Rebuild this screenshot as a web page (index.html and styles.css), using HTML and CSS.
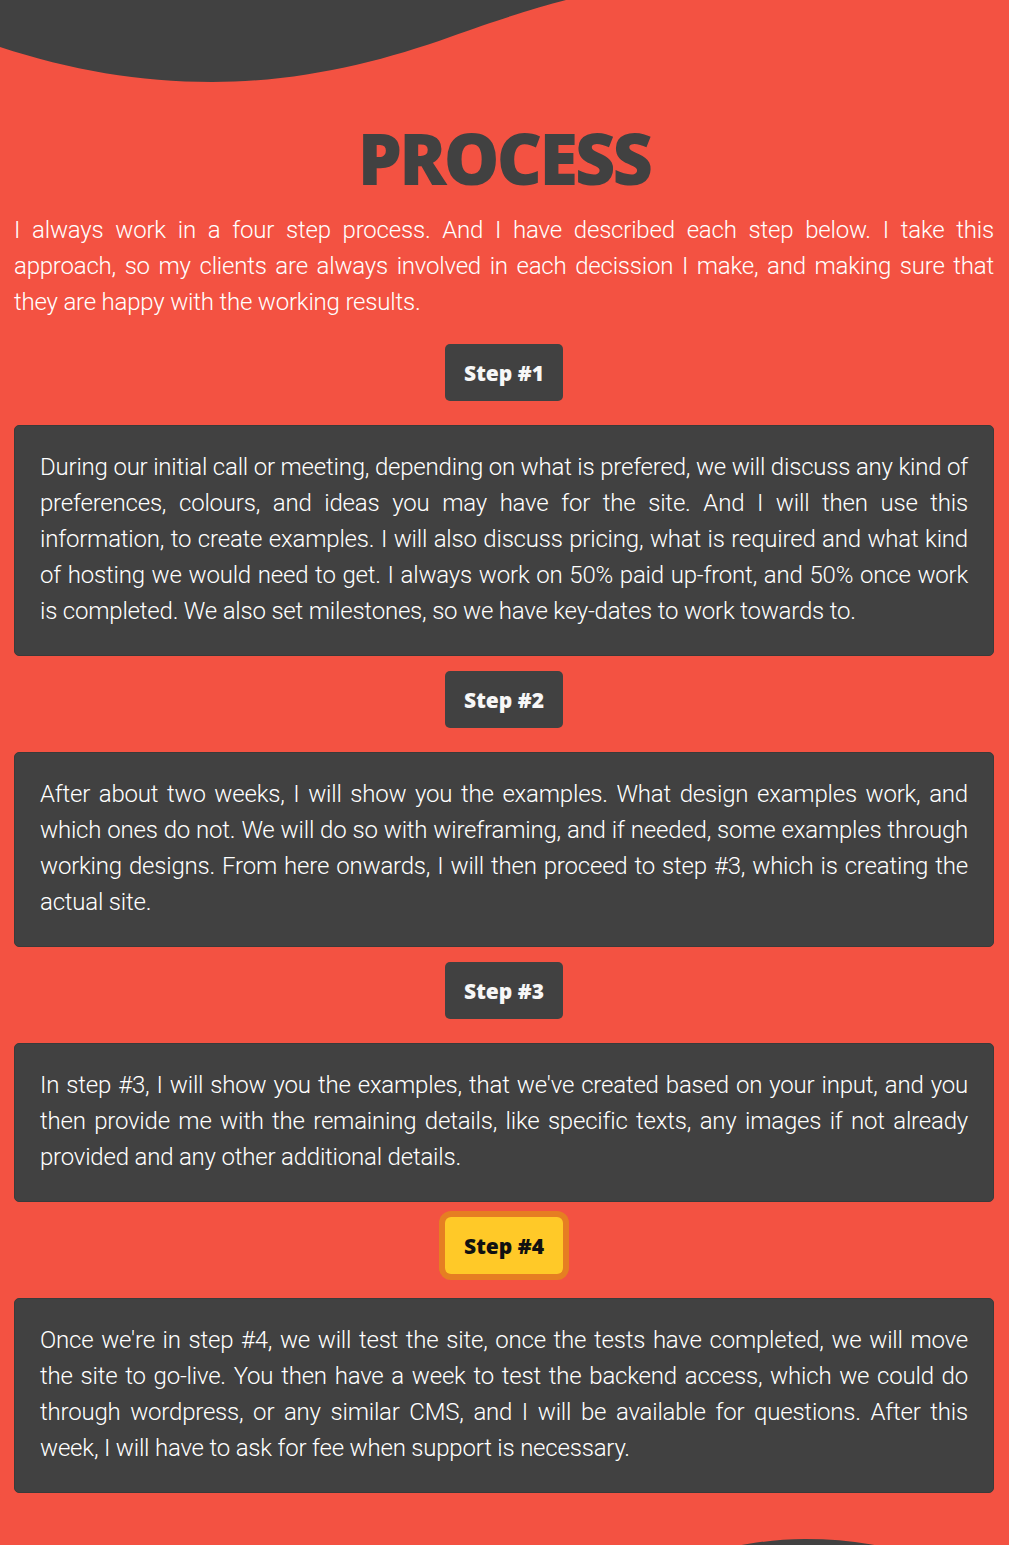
FILE: index.html
```html
<!DOCTYPE html>
<html lang="en">
<head>
<meta charset="utf-8">
<title>Process</title>
<link rel="stylesheet" href="styles.css">
</head>
<body>
<section class="process">
  <svg class="wave-top" viewBox="0 0 1009 84" preserveAspectRatio="none" aria-hidden="true">
    <path d="M0,0 L0,47 C70,70 140,82 212,82 C300,82 380,62 450,37 C500,19 535,8 566,0 Z" fill="#414141"/>
  </svg>
  <div class="content">
    <h1 class="title">PROCESS</h1>
    <p class="intro">I always work in a four step process. And I have described each step below. I take this approach, so my clients are always involved in each decission I make, and making sure that they are happy with the working results.</p>

    <div class="steps">
      <button class="step-btn first">Step #1</button>
      <div class="step-box">
        <p>During our initial call or meeting, depending on what is prefered, we will discuss any kind of preferences, colours, and ideas you may have for the site. And I will then use this information, to create examples. I will also discuss pricing, what is required and what kind of hosting we would need to get. I always work on 50% paid up-front, and 50% once work is completed. We also set milestones, so we have key-dates to work towards to.</p>
      </div>

      <button class="step-btn">Step #2</button>
      <div class="step-box">
        <p>After about two weeks, I will show you the examples. What design examples work, and which ones do not. We will do so with wireframing, and if needed, some examples through working designs. From here onwards, I will then proceed to step #3, which is creating the actual site.</p>
      </div>

      <button class="step-btn">Step #3</button>
      <div class="step-box">
        <p>In step #3, I will show you the examples, that we've created based on your input, and you then provide me with the remaining details, like specific texts, any images if not already provided and any other additional details.</p>
      </div>

      <button class="step-btn active">Step #4</button>
      <div class="step-box">
        <p>Once we're in step #4, we will test the site, once the tests have completed, we will move the site to go-live. You then have a week to test the backend access, which we could do through wordpress, or any similar CMS, and I will be available for questions. After this week, I will have to ask for fee when support is necessary.</p>
      </div>
    </div>
  </div>
  <svg class="wave-bottom" viewBox="0 0 1009 60" preserveAspectRatio="none" aria-hidden="true">
    <path d="M0,60 L520,60 C640,60 700,9 805,9 C900,9 960,40 1009,60 Z" fill="#414141"/>
  </svg>
</section>
</body>
</html>
```

FILE: styles.css
```css
* {
  box-sizing: border-box;
}

html, body {
  margin: 0;
  padding: 0;
  background: #f35242;
}

body {
  font-family: "Roboto Light", Roboto, "Open Sans", sans-serif;
  color: #ffffff;
}

.process {
  display: flex;
  flex-direction: column;
}

.wave-top {
  display: block;
  width: 100%;
  height: 84px;
}

.wave-bottom {
  display: block;
  width: 100%;
  height: 60px;
  margin-top: 37px;
}

.content {
  padding: 0 15px 0 14px;
}

.title {
  margin: 32px 0 0;
  font-family: "Open Sans", sans-serif;
  font-weight: 800;
  font-size: 70px;
  line-height: 84px;
  letter-spacing: -2.8px;
  text-align: center;
  color: #414141;
}

.intro {
  margin: 12px 0 0;
  font-weight: 300;
  font-size: 24px;
  line-height: 36px;
  letter-spacing: -0.2px;
  text-align: justify;
  color: #ffffff;
}

.steps {
  display: flex;
  flex-direction: column;
  align-items: center;
}

.step-btn {
  width: 118px;
  height: 57px;
  margin-top: 15px;
  border: none;
  border-radius: 5px;
  background: #414141;
  color: #f7f7f7;
  font-family: "Open Sans", sans-serif;
  font-weight: 800;
  font-size: 21px;
  letter-spacing: 0;
  cursor: pointer;
}

.step-btn.first {
  margin-top: 24px;
}

.step-btn.active {
  background: #ffc928;
  color: #111111;
  box-shadow: 0 0 0 6px #e67e22;
  border-radius: 6px;
}

.step-box {
  align-self: stretch;
  margin-top: 24px;
  padding: 23px 25px 26px;
  background: #414141;
  border: 1px solid #3a3a3a;
  border-radius: 5px;
}

.step-box p {
  margin: 0;
  font-weight: 300;
  font-size: 24px;
  line-height: 36px;
  letter-spacing: -0.2px;
  text-align: justify;
  color: #ffffff;
}
```
